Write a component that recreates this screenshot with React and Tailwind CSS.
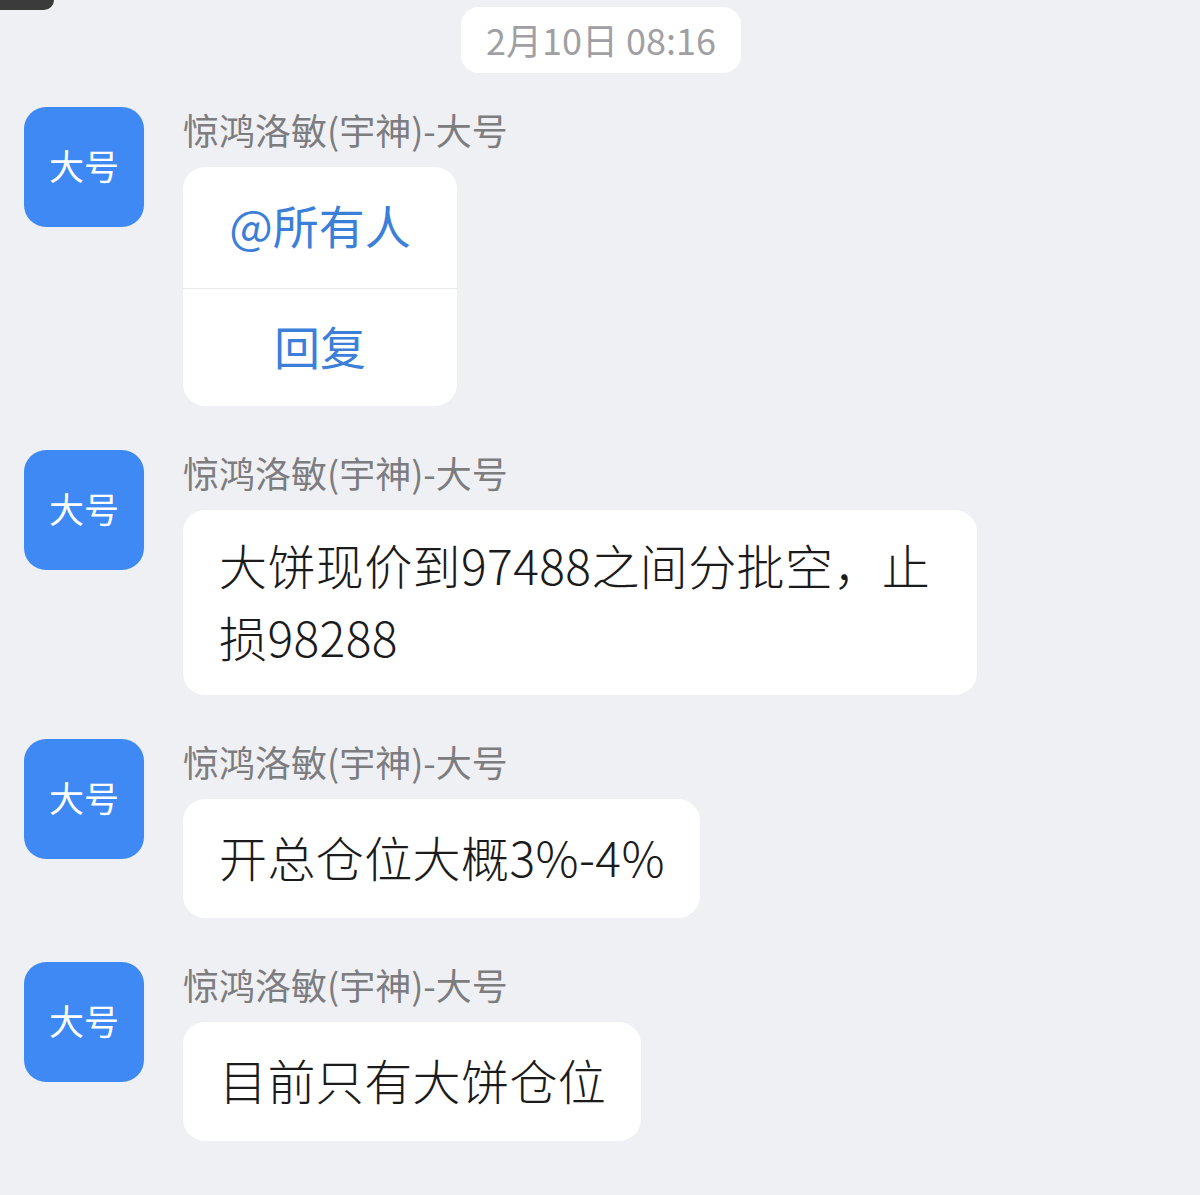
import React from 'react';

const FONT = { fontFamily: '"Noto Sans CJK SC", "Noto Sans", sans-serif' };

const senderName = '惊鸿洛敏(宇神)-大号';

const messages = [
  { id: 1, kind: 'actions' },
  { id: 2, kind: 'text', lines: ['大饼现价到97488之间分批空，止', '损98288'], wide: true },
  { id: 3, kind: 'text', lines: ['开总仓位大概3%-4%'] },
  { id: 4, kind: 'text', lines: ['目前只有大饼仓位'] },
];

const Avatar = () => (
  <div className="w-[120px] h-[120px] shrink-0 rounded-[22px] bg-[#3e89f4] flex items-center justify-center pb-[5px]">
    <span className="text-white text-[35px] leading-none">大号</span>
  </div>
);

const ActionCard = () => (
  <div className="w-[274px] bg-white rounded-[22px] overflow-hidden text-[#3b7fd9] text-[46px] leading-none">
    <div className="h-[121px] flex items-center justify-center pb-[8px]">@所有人</div>
    <div className="h-px bg-[#ebebee]" />
    <div className="h-[117px] flex items-center justify-center pb-[6px]">回复</div>
  </div>
);

// multi-line bubbles sit a bit tighter, like the Android TextView in the shot
const TextBubble = ({ lines, wide }) => (
  <div
    className={`${wide ? 'w-[794px] pt-[20.5px] pb-[26.5px]' : 'w-fit pt-[23.5px] pb-[29.5px]'} bg-white rounded-[22px] pl-[36px] pr-[35px] text-[48px] leading-[66px] tracking-[0.4px] text-[#1b1b1b] font-light whitespace-nowrap flex flex-col gap-[6px]`}
  >
    {lines.map((line, i) => (
      <div key={i}>{line}</div>
    ))}
  </div>
);

const Message = ({ message }) => (
  <div className="flex items-start gap-[39px] pl-[24px]">
    <Avatar />
    <div className="flex flex-col">
      <div className="h-[60px] text-[36px] leading-[45px] text-[#7d7d80]">{senderName}</div>
      {message.kind === 'actions' ? (
        <ActionCard />
      ) : (
        <TextBubble lines={message.lines} wide={message.wide} />
      )}
    </div>
  </div>
);

export default function App() {
  return (
    <div className="relative min-h-screen bg-[#eff0f4] pt-[7px]" style={FONT}>
      {/* clipped bit of a dark overlay in the corner */}
      <div className="absolute left-0 top-0 w-[54px] h-[10px] bg-[#3b3b3b] rounded-br-[10px]" />

      <div className="flex justify-center pl-[2px]">
        <div className="w-[280px] h-[66px] bg-white rounded-[18px] flex items-center justify-center pb-[3px] text-[36px] leading-none text-[#a0a0a4]">
          2月10日 08:16
        </div>
      </div>

      <div className="mt-[34px] flex flex-col gap-[44px]">
        {messages.map((m) => (
          <Message key={m.id} message={m} />
        ))}
      </div>
    </div>
  );
}
